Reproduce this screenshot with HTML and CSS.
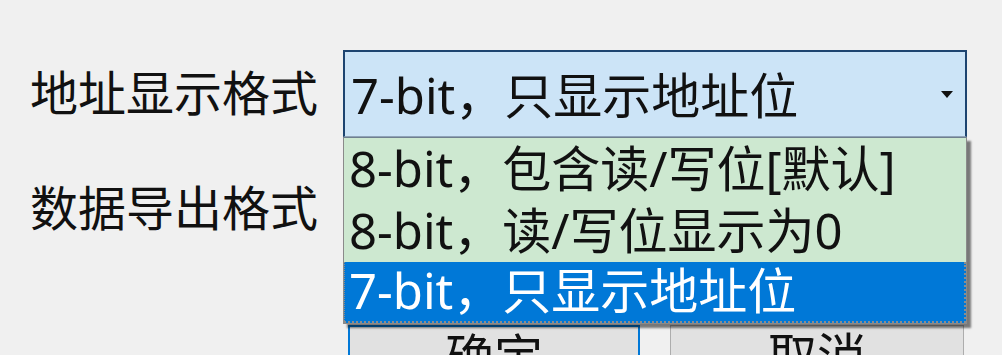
FILE: index.html
```html
<!DOCTYPE html>
<html lang="zh-CN">
<head>
<meta charset="utf-8">
<link rel="stylesheet" href="styles.css">
</head>
<body>
<div class="dialog">
  <div class="form">
    <div class="label">地址显示格式</div>
    <div class="combo-wrap">
      <div class="combo focused">
        <span class="combo-text">7-bit，只显示地址位</span>
        <svg class="arrow" width="12" height="7" viewBox="0 0 12 7"><path d="M0 0 L12 0 L6 7 Z" fill="#111"/></svg>
      </div>
      <ul class="dropdown">
        <li class="item">8-bit，包含读/写位[默认]</li>
        <li class="item">8-bit，读/写位显示为0</li>
        <li class="item selected">7-bit，只显示地址位</li>
      </ul>
    </div>
    <div class="label">数据导出格式</div>
    <div class="combo-wrap">
      <div class="combo">
        <span class="combo-text"></span>
      </div>
    </div>
  </div>
  <div class="buttons">
    <div class="btn default">确定</div>
    <div class="btn">取消</div>
  </div>
</div>
</body>
</html>
```

FILE: styles.css
```css
html, body {
  margin: 0;
  padding: 0;
  background: #f0f0f0;
  overflow: hidden;
}
body {
  width: 1002px;
  height: 355px;
  font-family: "Noto Sans", "Noto Sans CJK SC", sans-serif;
  font-size: 49px;
  color: #111;
}
.dialog {
  padding: 50px 0 0 30px;
}
.form {
  display: grid;
  grid-template-columns: 313px 624px;
  grid-auto-rows: 87px;
  row-gap: 28px;
  align-items: center;
}
.label {
  font-size: 48px;
  line-height: 87px;
  white-space: nowrap;
  position: relative;
  top: -1px;
}
.combo-wrap {
  position: relative;
  height: 87px;
}
.combo {
  box-sizing: border-box;
  height: 87px;
  border: 1px solid #adadad;
  background: #e5e5e5;
  display: flex;
  align-items: center;
  justify-content: space-between;
  padding: 0 12px 0 8px;
}
.combo.focused {
  background: #cce4f7;
  border: 2px solid #1d4470;
  border-bottom: 1px solid #8fa3b8;
  padding-left: 6px;
}
.combo-text {
  white-space: nowrap;
  line-height: 60px;
  position: relative;
  top: 1px;
}
.arrow {
  display: block;
}
.dropdown {
  position: absolute;
  top: 87px;
  left: 0;
  width: 624px;
  box-sizing: border-box;
  margin: 0;
  padding: 0;
  list-style: none;
  border: 1px solid #8a8a8a;
  border-top: 1px solid #6f7f8f;
  background: #cde8d0;
  box-shadow: 4px 4px 2px rgba(0, 0, 0, 0.5);
  z-index: 2;
}
.item {
  box-sizing: border-box;
  height: 62px;
  line-height: 60px;
  padding-left: 5px;
  white-space: nowrap;
}
.item.selected {
  height: 61px;
  background: #0078d7;
  color: #fff;
  border: 2px dotted #8c8c8c;
  border-top: none;
  border-left: 1px dotted #8c8c8c;
  padding-left: 4px;
  line-height: 57px;
}
.buttons {
  display: flex;
  gap: 30px;
  margin-top: 73px;
  padding-left: 318px;
}
.btn {
  box-sizing: border-box;
  width: 294px;
  height: 62px;
  background: #e1e1e1;
  border: 1px solid #adadad;
  text-align: center;
  line-height: 58px;
}
.btn.default {
  width: 292px;
  border: 2px solid #0078d7;
}
```
